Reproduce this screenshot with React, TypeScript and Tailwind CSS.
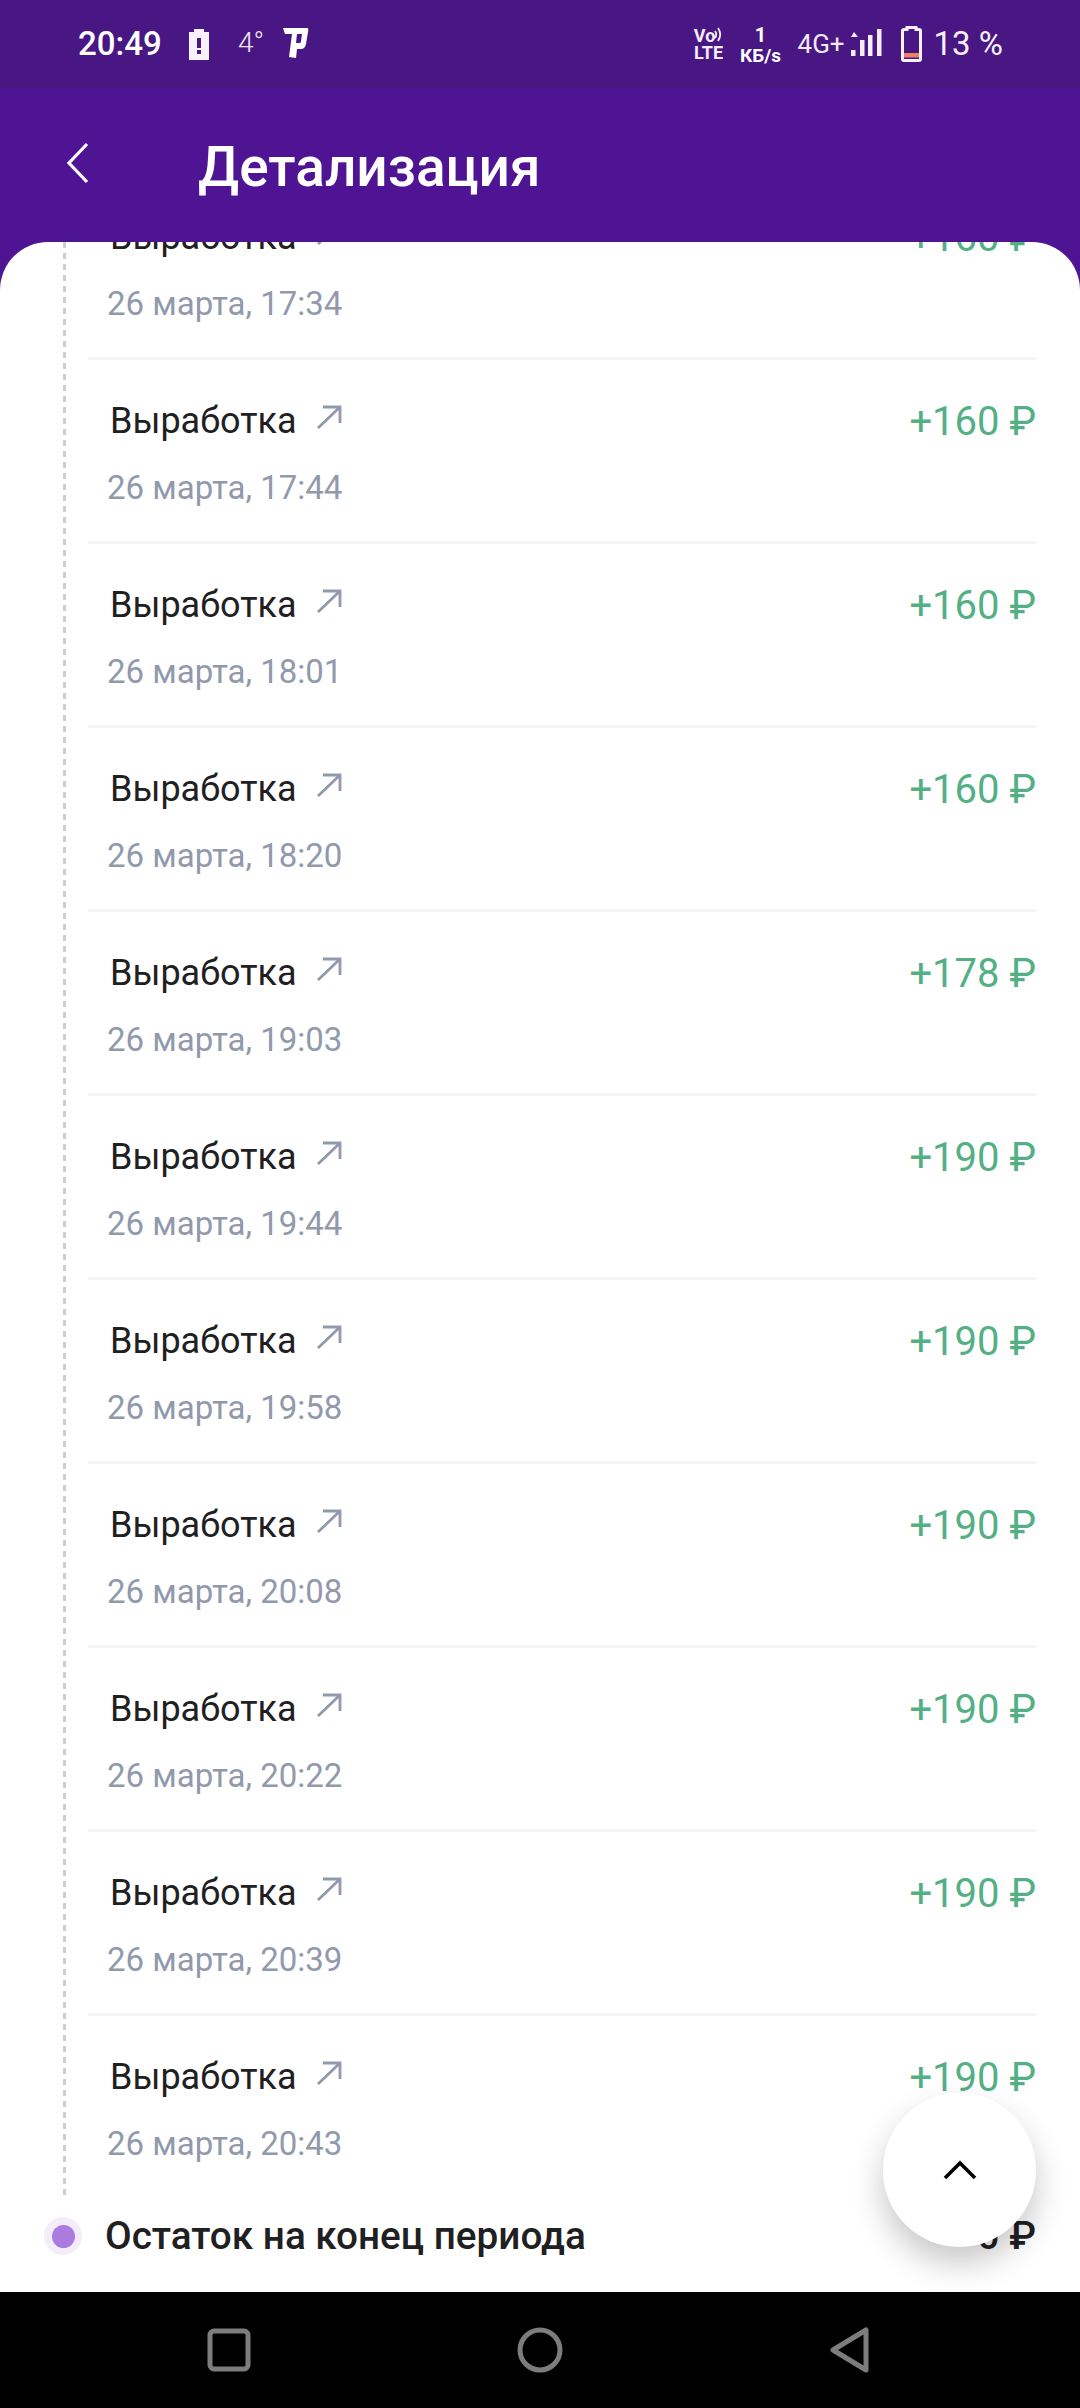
const rows = [
  ["26 марта, 17:34", "+160 ₽"],
  ["26 марта, 17:44", "+160 ₽"],
  ["26 марта, 18:01", "+160 ₽"],
  ["26 марта, 18:20", "+160 ₽"],
  ["26 марта, 19:03", "+178 ₽"],
  ["26 марта, 19:44", "+190 ₽"],
  ["26 марта, 19:58", "+190 ₽"],
  ["26 марта, 20:08", "+190 ₽"],
  ["26 марта, 20:22", "+190 ₽"],
  ["26 марта, 20:39", "+190 ₽"],
  ["26 марта, 20:43", "+190 ₽"],
];

function Arrow() {
  return (
    <svg className="ml-[19px] mt-[-8px] w-[26px] h-[26px]" viewBox="0 0 26 26" fill="none" stroke="#9199ac" strokeWidth="2.8">
      <path d="M2 24 L24 3 M7 3 H24 V19" />
    </svg>
  );
}

function StatusBar() {
  return (
    <div className="h-[88px] bg-[#481783] flex items-center text-white shrink-0 pl-[78px] pr-[77px]">
      <span className="text-[33px] font-medium leading-none mt-[-1px] w-[82px]">20:49</span>
      <svg className="ml-[29px] w-[20px] h-[32px]" viewBox="0 0 20 32">
        <path d="M0 4 H5 V1 H15 V4 H20 V32 H0 Z" fill="#f6f1fb" />
        <rect x="8" y="10" width="4" height="10" fill="#481783" />
        <rect x="8" y="22" width="4" height="4" fill="#481783" />
      </svg>
      <span className="ml-[29px] text-[28px] font-light leading-none text-[#eee6f6] w-[22px] mt-[-2px]">4°</span>
      <svg className="ml-[23px] w-[26px] h-[32px] mt-[-2px]" viewBox="0 0 26 32">
        <path d="M0 1 H24 Q26 1 25 5 L23 17 Q22 22 18 22 H14 L13 31 L6 30 L9 7 H2 Z M14 7 L13 16 H17 Q18 16 18 14 L19 7 Z" fill="#fff" fillRule="evenodd" />
      </svg>
      <div className="ml-auto flex flex-col items-center w-[28px] leading-none font-bold text-[#f4eefa]">
        <div className="flex items-start h-[16px]">
          <span className="text-[18px] leading-[16px]">Vo</span>
          <svg className="w-[9px] h-[18px] mt-[-3px] ml-[-1px]" viewBox="0 0 9 18" fill="none" stroke="#f4eefa" strokeWidth="1.8">
            <path d="M1 6 Q3.5 9.5 1 13 M4 3 Q8.5 9.5 4 16" />
          </svg>
        </div>
        <span className="text-[18px] leading-[15px] mt-[1px]">LTE</span>
      </div>
      <div className="ml-[17px] flex flex-col items-center leading-none font-medium w-[42px] mt-[2px]">
        <span className="text-[20px] leading-[21px] font-bold">1</span>
        <span className="text-[19px] leading-[20px] font-bold whitespace-nowrap">КБ/s</span>
      </div>
      <div className="ml-[16px] w-[46px] h-[30px]">
        <span className="text-[26px] leading-[30px] whitespace-nowrap text-[#f0e9f8] block">4G+</span>
      </div>
      <svg className="ml-[7px] w-[32px] h-[30px] mt-[-2px]" viewBox="0 0 32 30" fill="#f4eefa">
        <path d="M3 6 L7 11 H0 Z" transform="translate(0 -2)" />
        <rect x="0" y="22" width="4.5" height="6" />
        <rect x="9" y="12" width="4.5" height="16" />
        <rect x="17" y="7" width="4.5" height="21" />
        <rect x="26" y="1" width="4.5" height="27" />
      </svg>
      <svg className="ml-[18px] w-[21px] h-[36px]" viewBox="0 0 21 36">
        <path d="M6 1.5 H15 V3.5 H18 Q19.5 3.5 19.5 5 V33 Q19.5 34.5 18 34.5 H3 Q1.5 34.5 1.5 33 V5 Q1.5 3.5 3 3.5 H6 Z" fill="none" stroke="#f6f1fb" strokeWidth="3" />
        <rect x="3" y="27" width="15" height="4.5" fill="#ef8062" />
      </svg>
      <span className="ml-[12px] text-[33px] leading-none whitespace-nowrap text-[#f6f1fb] mt-[-1px]">13 %</span>
    </div>
  );
}

function Row({ date, amount, last }: { date: string; amount: string; last: boolean }) {
  return (
    <div className={`flex flex-col ${last ? "h-[182px]" : "h-[184px] border-b-[3px] border-[#f4f5f7]"}`}>
      <div className="flex justify-between items-start pt-[39px]">
        <div className="flex items-center ml-[22px]">
          <span className="text-[36px] leading-[44px] text-[#1f2022]">Выработка</span>
          <Arrow />
        </div>
        <span className="text-[40px] leading-[44px] text-[#53b084] mt-[1px]">{amount}</span>
      </div>
      <div className="text-[33px] leading-[44px] text-[#9199ac] ml-[19px] mt-[22px]">{date}</div>
    </div>
  );
}

export default function App() {
  return (
    <div className="w-[1080px] h-[2408px] flex flex-col bg-[#4f1494] font-['Roboto',sans-serif] overflow-hidden">
      <StatusBar />
      <div className="h-[154px] shrink-0 flex items-center pl-[66px] text-white">
        <svg className="w-[24px] h-[42px] mt-[-4px]" viewBox="0 0 24 42" fill="none" stroke="#fff" strokeWidth="3.2">
          <path d="M21 2 L3 21 L21 40" />
        </svg>
        <span className="ml-[108px] text-[55px] font-medium leading-none mt-[4px]">Детализация</span>
      </div>
      <div className="relative flex-1 bg-white rounded-t-[48px] overflow-hidden">
        <div className="mt-[-66px] flex">
          <div className="w-[88px] shrink-0 pl-[63px]">
            <div className="w-[3px] h-full bg-[repeating-linear-gradient(to_bottom,#c9cdd6_0,#c9cdd6_6px,transparent_6px,transparent_11px)]" />
          </div>
          <div className="w-[948px]">
            {rows.map(([date, amount], i) => (
              <Row key={date} date={date} amount={amount} last={i === rows.length - 1} />
            ))}
          </div>
        </div>
        <div className="flex items-center h-[76px] pl-[44px] pr-[44px]">
          <div className="w-[38px] h-[38px] rounded-full bg-[#f3ecfa] flex items-center justify-center shrink-0">
            <div className="w-[23px] h-[23px] rounded-full bg-[#ab7be0]" />
          </div>
          <span className="ml-[23px] text-[38.7px] font-medium text-[#1f2022] leading-none">Остаток на конец периода</span>
          <span className="ml-auto text-[39px] font-medium text-[#1f2022] leading-none">0 ₽</span>
        </div>
        <button className="absolute left-[883px] top-[1851px] w-[153px] h-[154px] rounded-full bg-white shadow-[0_16px_32px_rgba(0,0,0,0.22)] flex items-center justify-center">
          <svg className="w-[34px] h-[20px]" viewBox="0 0 34 20" fill="none" stroke="#000" strokeWidth="3.6">
            <path d="M2 18 L17 3 L32 18" />
          </svg>
        </button>
      </div>
      <div className="h-[116px] bg-black shrink-0 flex items-center relative pl-[207px]">
        <svg className="w-[44px] h-[44px]" viewBox="0 0 44 44" fill="none" stroke="#7d7d7d" strokeWidth="5">
          <rect x="3" y="3" width="38" height="38" rx="4" />
        </svg>
        <svg className="ml-[266px] w-[46px] h-[46px]" viewBox="0 0 46 46" fill="none" stroke="#7d7d7d" strokeWidth="5">
          <circle cx="23" cy="23" r="20" />
        </svg>
        <svg className="ml-[266px] w-[42px] h-[46px]" viewBox="0 0 42 46" fill="none" stroke="#7d7d7d" strokeWidth="5" strokeLinejoin="round">
          <path d="M37 3 V43 L4 23 Z" />
        </svg>
      </div>
    </div>
  );
}
